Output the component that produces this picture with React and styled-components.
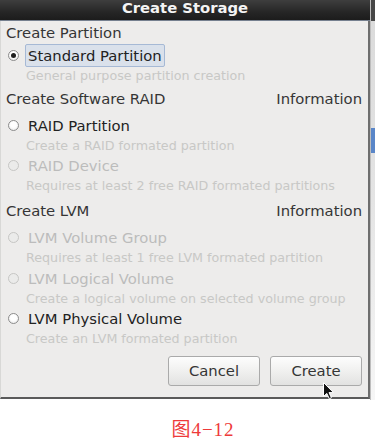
import React from "react";
import styled, { createGlobalStyle } from "styled-components";

const GlobalStyle = createGlobalStyle`
  html, body {
    margin: 0;
    padding: 0;
    background: #ffffff;
  }
  body {
    font-family: "DejaVu Sans", "Liberation Sans", sans-serif;
  }
`;

const sections = [
  {
    title: "Create Partition",
    info: false,
    gap: 0,
    lead: 2,
    items: [
      {
        label: "Standard Partition",
        desc: "General purpose partition creation",
        checked: true,
        disabled: false,
      },
    ],
  },
  {
    title: "Create Software RAID",
    info: true,
    gap: 3,
    lead: 6,
    items: [
      {
        label: "RAID Partition",
        desc: "Create a RAID formated partition",
        disabled: false,
      },
      {
        label: "RAID Device",
        desc: "Requires at least 2 free RAID formated partitions",
        disabled: true,
      },
    ],
  },
  {
    title: "Create LVM",
    info: true,
    gap: 5.5,
    lead: 6,
    items: [
      {
        label: "LVM Volume Group",
        desc: "Requires at least 1 free LVM formated partition",
        disabled: true,
      },
      {
        label: "LVM Logical Volume",
        desc: "Create a logical volume on selected volume group",
        disabled: true,
      },
      {
        label: "LVM Physical Volume",
        desc: "Create an LVM formated partition",
        disabled: false,
      },
    ],
  },
];

const App = () => {
  return (
    <>
      <GlobalStyle />
      <Page>
        <Column>
          <Dialog>
            <TitleBar>Create Storage</TitleBar>
            <Body>
              {sections.map((section) => (
                <Section key={section.title} $gap={section.gap}>
                  <Header>
                    <span>{section.title}</span>
                    {section.info && <span>Information</span>}
                  </Header>
                  <Options $lead={section.lead}>
                    {section.items.map((item) => (
                      <Option key={item.label}>
                        <Row>
                          <Radio $disabled={item.disabled} $checked={item.checked} />
                          <Label $disabled={item.disabled} $selected={item.checked}>
                            {item.label}
                          </Label>
                        </Row>
                        <Desc>{item.desc}</Desc>
                      </Option>
                    ))}
                  </Options>
                </Section>
              ))}
              <Footer>
                <Button>Cancel</Button>
                <Button>
                  Create
                  <Pointer width="12" height="18" viewBox="0 0 12 18">
                    <path
                      d="M0.5 0.5 L0.5 14.5 L3.8 11.4 L6.3 16.8 L8.4 15.8 L6 10.6 L10.5 10.6 Z"
                      fill="#111"
                      stroke="#fff"
                      strokeWidth="1"
                      strokeLinejoin="round"
                    />
                  </Pointer>
                </Button>
              </Footer>
            </Body>
          </Dialog>
          <Caption>图4−12</Caption>
        </Column>
        <Strip>
          <StripTop />
          <StripMark />
        </Strip>
      </Page>
    </>
  );
};

export default App;

const Page = styled.div`
  display: flex;
  align-items: flex-start;
  width: 375px;
  height: 440px;
  overflow: hidden;
`;

const Column = styled.div`
  width: 371px;
  display: flex;
  flex-direction: column;
`;

const Dialog = styled.div`
  display: flex;
  flex-direction: column;
`;

const TitleBar = styled.div`
  height: 20px;
  line-height: 16px;
  text-align: center;
  color: #f4f4f4;
  font-weight: bold;
  font-size: 14.8px;
  background: linear-gradient(#3e3e3e, #262626 60%, #1c1c1c);
  border-bottom: 1px solid #76808f;
  box-sizing: content-box;
`;

const Body = styled.div`
  background: #edeceb;
  padding: 2px 6px 11px 5px;
  border-left: 1px solid #d8d8d6;
  border-right: 2px solid #6e6e6e;
  border-bottom: 2px solid #5a5a5a;
  display: flex;
  flex-direction: column;
`;

const Section = styled.div`
  margin-top: ${(p) => p.$gap}px;
  display: flex;
  flex-direction: column;
`;

const Header = styled.div`
  height: 20px;
  line-height: 20px;
  font-size: 14.8px;
  color: #353535;
  display: flex;
  justify-content: space-between;
`;

const Options = styled.div`
  margin-top: ${(p) => p.$lead}px;
  display: flex;
  flex-direction: column;
`;

const Option = styled.div`
  display: flex;
  flex-direction: column;
`;

const Row = styled.div`
  height: 21px;
  display: flex;
  align-items: center;
`;

const Radio = styled.span`
  box-sizing: border-box;
  width: 11px;
  height: 11px;
  margin-left: 1.5px;
  margin-right: 6.5px;
  border-radius: 50%;
  border: 1px solid ${(p) => (p.$disabled ? "#c6c6c4" : "#8c8c8c")};
  background: ${(p) =>
    p.$disabled
      ? "#ebebea"
      : "radial-gradient(circle at 50% 40%, #ffffff 40%, #e2e2e2 100%)"};
  position: relative;
  &::after {
    content: "";
    display: ${(p) => (p.$checked ? "block" : "none")};
    position: absolute;
    left: 2px;
    top: 2px;
    width: 5px;
    height: 5px;
    border-radius: 50%;
    background: #1e1e1e;
  }
`;

const Label = styled.span`
  font-size: 14.8px;
  line-height: 21px;
  height: 21px;
  padding: 0 2px;
  border: 1px solid ${(p) => (p.$selected ? "#a6b9d5" : "transparent")};
  background: ${(p) => (p.$selected ? "#dae1eb" : "transparent")};
  border-radius: 2px;
  color: ${(p) => (p.$disabled ? "#bcbcbc" : "#222222")};
  box-sizing: content-box;
  display: flex;
  align-items: center;
`;

const Desc = styled.div`
  height: 19.5px;
  line-height: 19.5px;
  font-size: 12.7px;
  color: #c8c8c6;
  padding-left: 20px;
  white-space: nowrap;
`;

const Footer = styled.div`
  margin-top: 7px;
  display: flex;
  justify-content: flex-end;
  gap: 10px;
`;

const Button = styled.div`
  position: relative;
  box-sizing: border-box;
  width: 92px;
  height: 30px;
  border: 1px solid #aaaaaa;
  border-radius: 3px;
  background: linear-gradient(#fdfdfd, #f0f0ef 50%, #e2e2e1);
  font-size: 14.8px;
  color: #353535;
  display: flex;
  align-items: center;
  justify-content: center;
`;

const Pointer = styled.svg`
  position: absolute;
  left: 52px;
  top: 25px;
`;

const Caption = styled.div`
  margin-top: 21px;
  padding-left: 36px;
  text-align: center;
  font-family: "Liberation Serif", "Noto Sans CJK SC", serif;
  font-size: 19px;
  line-height: 19px;
  color: #ee3a3a;
  letter-spacing: 1px;
`;

const Strip = styled.div`
  width: 4px;
  height: 400px;
  background: linear-gradient(#dadada, #e4e4e4 50%, #f6f6f6);
  border-left: 1px solid #bdbdbd;
  display: flex;
  flex-direction: column;
`;

const StripTop = styled.div`
  height: 21px;
  background: #474747;
`;

const StripMark = styled.div`
  margin-top: 107px;
  height: 25px;
  background: #5a86c8;
`;
